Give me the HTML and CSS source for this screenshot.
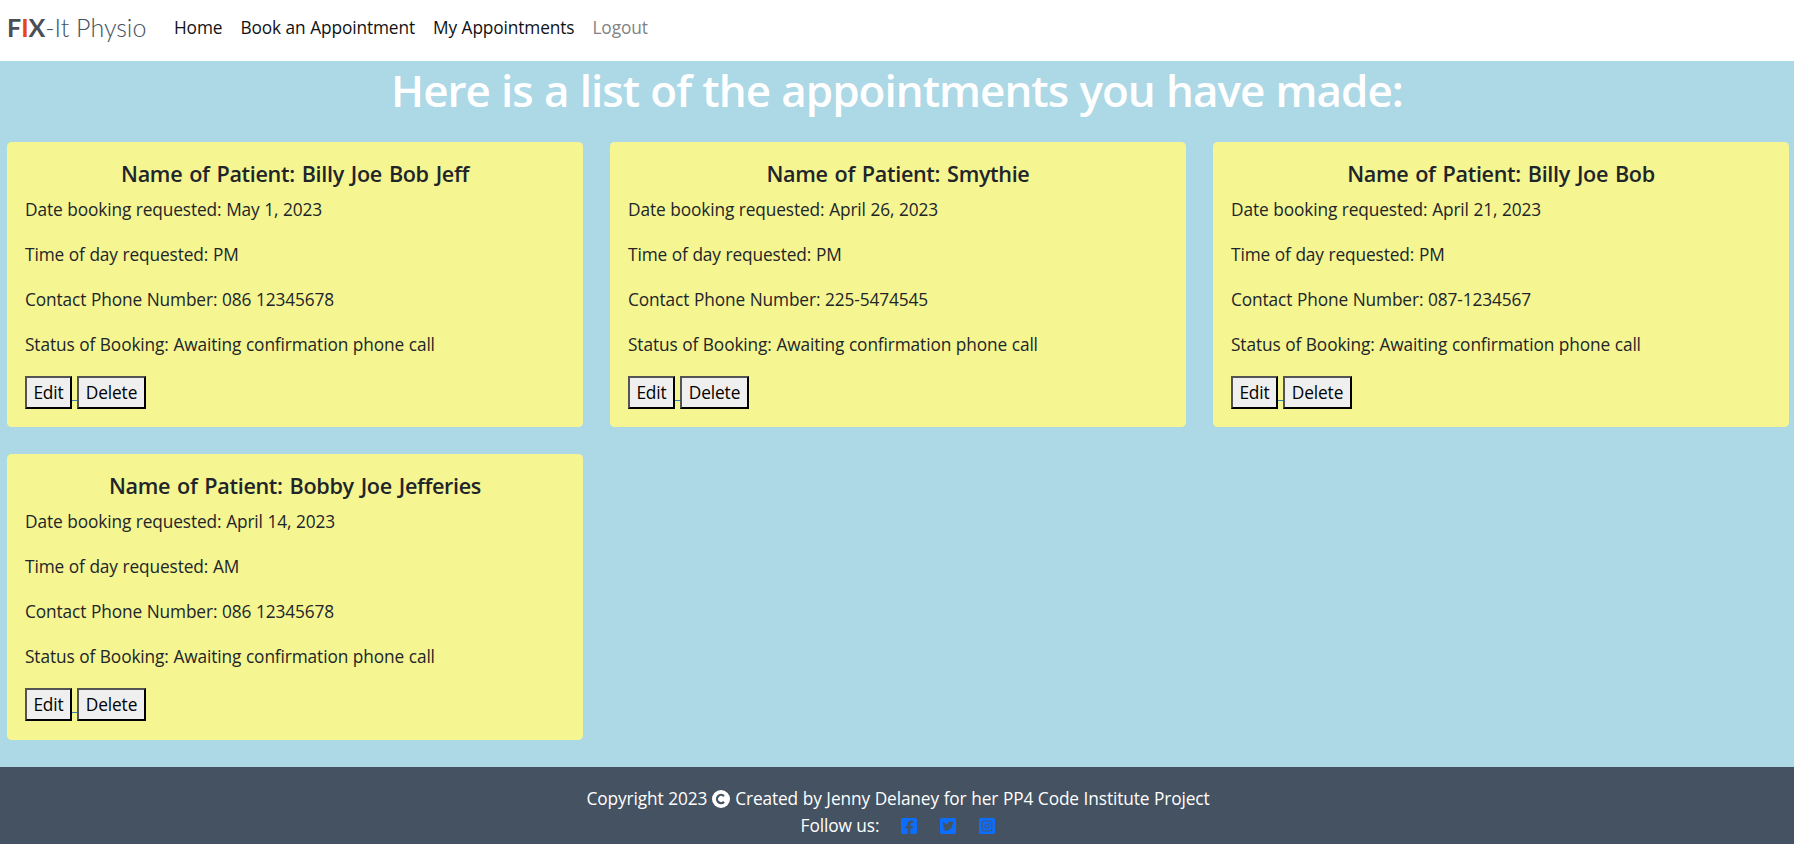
FILE: index.html
```html
<!DOCTYPE html>
<html lang="en">
<head>
<meta charset="utf-8">
<title>FIX-It Physio</title>
<link rel="stylesheet" href="styles.css">
</head>
<body>
<nav class="navbar">
  <a class="brand" href="#"><b>F<span class="accent">I</span>X</b>-It Physio</a>
  <a class="nav-link" href="#">Home</a>
  <a class="nav-link" href="#">Book an Appointment</a>
  <a class="nav-link" href="#">My Appointments</a>
  <a class="nav-link muted" href="#">Logout</a>
</nav>
<main class="main">
  <h1 class="heading">Here is a list of the appointments you have made:</h1>
  <div class="cards">
    <article class="card">
      <h5 class="card-title">Name of Patient: Billy Joe Bob Jeff</h5>
      <p>Date booking requested: May 1, 2023</p>
      <p>Time of day requested: PM</p>
      <p>Contact Phone Number: 086 12345678</p>
      <p>Status of Booking: Awaiting confirmation phone call</p>
      <div class="actions"><button class="btn edit">Edit</button><a class="gap" href="#"></a><button class="btn delete">Delete</button></div>
    </article>
    <article class="card">
      <h5 class="card-title">Name of Patient: Smythie</h5>
      <p>Date booking requested: April 26, 2023</p>
      <p>Time of day requested: PM</p>
      <p>Contact Phone Number: 225-5474545</p>
      <p>Status of Booking: Awaiting confirmation phone call</p>
      <div class="actions"><button class="btn edit">Edit</button><a class="gap" href="#"></a><button class="btn delete">Delete</button></div>
    </article>
    <article class="card">
      <h5 class="card-title">Name of Patient: Billy Joe Bob</h5>
      <p>Date booking requested: April 21, 2023</p>
      <p>Time of day requested: PM</p>
      <p>Contact Phone Number: 087-1234567</p>
      <p>Status of Booking: Awaiting confirmation phone call</p>
      <div class="actions"><button class="btn edit">Edit</button><a class="gap" href="#"></a><button class="btn delete">Delete</button></div>
    </article>
    <article class="card">
      <h5 class="card-title">Name of Patient: Bobby Joe Jefferies</h5>
      <p>Date booking requested: April 14, 2023</p>
      <p>Time of day requested: AM</p>
      <p>Contact Phone Number: 086 12345678</p>
      <p>Status of Booking: Awaiting confirmation phone call</p>
      <div class="actions"><button class="btn edit">Edit</button><a class="gap" href="#"></a><button class="btn delete">Delete</button></div>
    </article>
  </div>
</main>
<footer class="footer">
  <div class="footer-line copyright">
    <span>Copyright 2023</span>
    <svg class="copy-icon" viewBox="0 0 18 18"><circle cx="9" cy="9" r="9" fill="#fff"/><path d="M12 6.1a4.1 4.1 0 1 0 0 5.8" fill="none" stroke="#445261" stroke-width="2.2"/></svg>
    <span>Created by Jenny Delaney for her PP4 Code Institute Project</span>
  </div>
  <div class="footer-line">
    <span class="follow">Follow us:</span>
    <a class="social" href="#"><svg viewBox="0 0 448 448"><path fill="#0d6efd" d="M400 0H48A48 48 0 0 0 0 48v352a48 48 0 0 0 48 48h137.300V295.700h-63V224h63v-54.600c0-62.200 37-96.500 93.700-96.500 27.100 0 55.500 4.800 55.500 4.800v61h-31.300c-30.800 0-40.400 19.100-40.400 38.700V224h68.800l-11 71.700h-57.800V448H400a48 48 0 0 0 48-48V48a48 48 0 0 0-48-48z"/></svg></a>
    <a class="social" href="#"><svg viewBox="0 32 448 448"><path fill="#0d6efd" d="M400 32H48C21.500 32 0 53.500 0 80v352c0 26.500 21.500 48 48 48h352c26.500 0 48-21.500 48-48V80c0-26.500-21.500-48-48-48zm-48.900 158.800c.2 2.800.2 5.700.2 8.500 0 86.700-66 186.600-186.600 186.600-37.200 0-71.700-10.800-100.700-29.400 5.300.6 10.400.8 15.800.8 30.700 0 58.900-10.400 81.400-28-28.800-.6-53-19.500-61.300-45.500 10.100 1.500 19.200 1.500 29.600-1.200-30-6.100-52.500-32.500-52.500-64.400v-.8c8.700 4.900 18.900 7.900 29.600 8.300a65.447 65.447 0 0 1-29.200-54.600c0-12.200 3.200-23.400 8.900-33.100 32.300 39.800 80.800 65.800 135.200 68.600-9.300-44.500 24-80.600 64-80.600 18.900 0 35.900 7.900 47.900 20.700 14.800-2.800 29-8.300 41.600-15.800-4.900 15.200-15.200 28-28.800 36.100 13.200-1.400 26-5.100 37.800-10.200-8.900 13.100-20.100 24.700-32.900 34z"/></svg></a>
    <a class="social" href="#"><svg viewBox="0 0 448 448"><rect width="448" height="448" rx="48" fill="#0d6efd"/><rect x="86" y="86" width="276" height="276" rx="74" fill="none" stroke="#3f587a" stroke-width="30"/><circle cx="224" cy="224" r="58" fill="none" stroke="#3f587a" stroke-width="30"/><circle cx="297" cy="152" r="17" fill="#3f587a"/></svg></a>
  </div>
</footer>
</body>
</html>
```
FILE: styles.css
```css
* { box-sizing: border-box; }
html { font-size: 18px; }
body {
  margin: 0;
  height: 844px;
  overflow: hidden;
  display: flex;
  flex-direction: column;
  background: #add8e6;
  color: #212529;
  font-family: "Open Sans", "Noto Sans", sans-serif;
  font-size: 17.3px;
  line-height: 27px;
  letter-spacing: -0.12px;
  word-spacing: 0.3px;
}
a { text-decoration: none; }
.navbar {
  flex: none;
  height: 61px;
  padding: 0 7px 7px;
  display: flex;
  align-items: center;
  background: #fff;
}
.brand {
  width: 167px;
  font-family: Lato, sans-serif;
  font-weight: 300;
  font-size: 25px;
  letter-spacing: 0;
  word-spacing: 0;
  color: #445261;
  white-space: nowrap;
}
.brand b { font-weight: 700; color: #4a4f56; }
.brand .accent { color: #e84610; }
.nav-link { color: #101214; margin-right: 18px; white-space: nowrap; }
.muted { color: #808386; }
.main { flex: 1; }
.heading {
  margin: 0 0 27px;
  height: 54px;
  line-height: 58px;
  text-align: center;
  color: #fff;
  font-weight: 600;
  font-size: 44px;
  letter-spacing: -1px;
  word-spacing: 0.8px;
  white-space: nowrap;
}
.cards {
  display: grid;
  grid-template-columns: repeat(3, 576px);
  gap: 27px;
  padding-left: 7px;
}
.card {
  height: 285.4px;
  padding: 18px;
  background: #f5f592;
  border-radius: 4.5px;
}
.card-title {
  margin: 0 0 9px;
  text-align: center;
  font-size: 21.6px;
  line-height: 27px;
  font-weight: 600;
  letter-spacing: -0.34px;
  word-spacing: 1.7px;
}
.card p { margin: 0 0 18px; }
.actions { display: flex; }
.btn {
  height: 33px;
  padding: 0;
  border: 2px outset #000;
  border-radius: 0;
  background: #efefef;
  color: #000;
  font: inherit;
  letter-spacing: inherit;
}
.edit { width: 47px; }
.delete { width: 69px; }
.gap { width: 5px; height: 25px; border-bottom: 1px solid #3184b5; }
.footer {
  flex: none;
  height: 77px;
  padding: 18px 0 0 2px;
  background: #445261;
  color: #fff;
}
.footer-line { height: 27px; display: flex; justify-content: center; align-items: center; }
.copyright { gap: 5px; }
.copy-icon { width: 18px; height: 18px; }
.follow { margin-right: 22px; }
.social { width: 16px; height: 16px; margin-right: 23px; display: flex; }
.social:last-child { margin-right: 0; }
.social svg { width: 16px; height: 16px; }
```
